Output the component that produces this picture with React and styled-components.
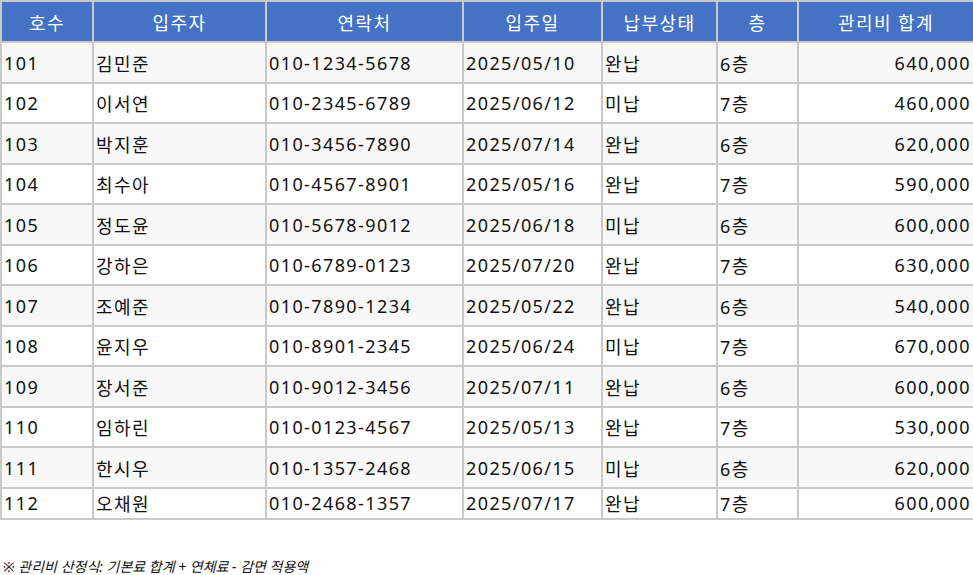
import React from "react";
import styled, { createGlobalStyle } from "styled-components";

const Global = createGlobalStyle`
  html, body { margin: 0; padding: 0; background: #ffffff; }
  body { font-family: "Noto Sans", "Open Sans", "Noto Sans CJK KR", sans-serif; color: #111; }
`;

const Page = styled.div`
  width: 973px;
  display: flex;
  flex-direction: column;
`;

const Table = styled.table`
  width: 973px;
  border-collapse: collapse;
  table-layout: fixed;
  font-size: 18px;
  letter-spacing: 1.4px;
`;

const HeadCell = styled.th`
  background: #4472c4;
  color: #ffffff;
  font-weight: 400;
  height: 39px;
  padding: 0 2px;
  border: 2px solid #c9c9c9;
  text-align: center;
  vertical-align: middle;
`;

const Row = styled.tr`
  height: ${(p) => (p.$last ? "31px" : "40.5px")};
  background: ${(p) => (p.$odd ? "#f8f8f8" : "#ffffff")};
`;

const Cell = styled.td`
  padding: ${(p) => (p.$last ? "0 2px" : "1px 2px 0")};
  border: 2px solid #c9c9c9;
  text-align: ${(p) => (p.$right ? "right" : "left")};
  vertical-align: middle;
  white-space: nowrap;
  overflow: hidden;
`;

const Note = styled.p`
  margin: 37px 0 0 3px;
  font-size: 14px;
  line-height: 20px;
  font-style: italic;
  color: #111;
`;

const cols = [92, 173, 197, 139, 115, 81, 176];
const heads = ["호수", "입주자", "연락처", "입주일", "납부상태", "층", "관리비 합계"];

const rows = [
  ["101", "김민준", "010-1234-5678", "2025/05/10", "완납", "6층", "640,000"],
  ["102", "이서연", "010-2345-6789", "2025/06/12", "미납", "7층", "460,000"],
  ["103", "박지훈", "010-3456-7890", "2025/07/14", "완납", "6층", "620,000"],
  ["104", "최수아", "010-4567-8901", "2025/05/16", "완납", "7층", "590,000"],
  ["105", "정도윤", "010-5678-9012", "2025/06/18", "미납", "6층", "600,000"],
  ["106", "강하은", "010-6789-0123", "2025/07/20", "완납", "7층", "630,000"],
  ["107", "조예준", "010-7890-1234", "2025/05/22", "완납", "6층", "540,000"],
  ["108", "윤지우", "010-8901-2345", "2025/06/24", "미납", "7층", "670,000"],
  ["109", "장서준", "010-9012-3456", "2025/07/11", "완납", "6층", "600,000"],
  ["110", "임하린", "010-0123-4567", "2025/05/13", "완납", "7층", "530,000"],
  ["111", "한시우", "010-1357-2468", "2025/06/15", "미납", "6층", "620,000"],
  ["112", "오채원", "010-2468-1357", "2025/07/17", "완납", "7층", "600,000"],
];

export default function App() {
  return (
    <Page>
      <Global />
      <Table>
        <colgroup>
          {cols.map((w, i) => (
            <col key={i} style={{ width: w }} />
          ))}
        </colgroup>
        <thead>
          <tr>
            {heads.map((h) => (
              <HeadCell key={h}>{h}</HeadCell>
            ))}
          </tr>
        </thead>
        <tbody>
          {rows.map((r, i) => {
            const last = i === rows.length - 1;
            return (
              <Row key={r[0]} $odd={i % 2 === 0} $last={last}>
                {r.map((c, j) => (
                  <Cell key={j} $right={j === 6} $last={last}>
                    {c}
                  </Cell>
                ))}
              </Row>
            );
          })}
        </tbody>
      </Table>
      <Note>※ 관리비 산정식: 기본료 합계 + 연체료 - 감면 적용액</Note>
    </Page>
  );
}
